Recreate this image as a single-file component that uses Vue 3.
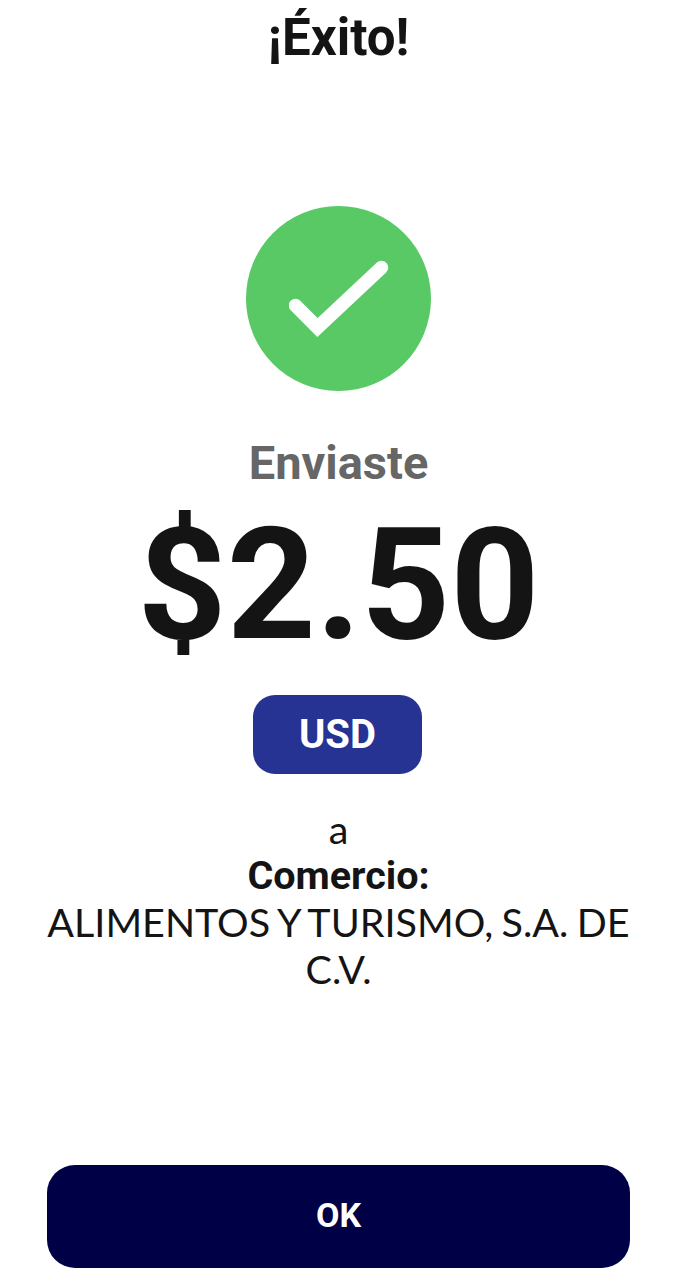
<template>
  <div class="screen">
    <h1 class="title">¡Éxito!</h1>
    <div class="check">
      <svg width="100" height="80" viewBox="0 0 100 80">
        <path d="M6.5 46.5 L28.5 68.5 L92.5 8.5" fill="none" stroke="#fff" stroke-width="13.5" stroke-linecap="round" stroke-linejoin="miter" />
      </svg>
    </div>
    <div class="sent">Enviaste</div>
    <div class="amount">$2.50</div>
    <div class="currency">USD</div>
    <div class="recipient">
      <div>a</div>
      <div class="label">Comercio:</div>
      <div>ALIMENTOS Y TURISMO, S.A. DE C.V.</div>
    </div>
    <button class="ok">OK</button>
  </div>
</template>

<script setup>
</script>

<style>
html, body {
  margin: 0;
  background: #fff;
}
</style>

<style scoped>
.screen {
  height: 1280px;
  display: flex;
  flex-direction: column;
  align-items: center;
  font-family: Roboto, sans-serif;
  color: #141414;
  box-sizing: border-box;
  padding: 0 47px;
}

.title {
  margin: 10px 0 0;
  font-size: 51px;
  line-height: 56px;
  font-weight: 700;
}

.check {
  width: 185px;
  height: 185px;
  margin-top: 140px;
  border-radius: 50%;
  background: #59c966;
  display: flex;
  align-items: center;
  justify-content: center;
}

.sent {
  margin-top: 44px;
  font-size: 47px;
  line-height: 56px;
  font-weight: 700;
  color: #666;
}

.amount {
  margin-top: 6px;
  font-size: 155.5px;
  line-height: 176px;
  font-weight: 700;
}

.currency {
  width: 169px;
  height: 79px;
  margin: 22px 2px 0 0;
  border-radius: 22px;
  background: #263393;
  color: #fff;
  font-size: 40px;
  font-weight: 700;
  display: flex;
  align-items: center;
  justify-content: center;
}

.recipient {
  margin-top: 32px;
  font-family: Lato, sans-serif;
  font-size: 39.5px;
  line-height: 46.5px;
  word-spacing: -1.7px;
  text-align: center;
}

.label {
  font-family: Roboto, sans-serif;
  font-size: 39.5px;
  font-weight: 700;
}

.ok {
  width: 100%;
  height: 103px;
  margin-top: auto;
  margin-bottom: 12px;
  padding: 0 0 4px;
  border: none;
  border-radius: 28px;
  background: #000046;
  color: #fff;
  font-family: Roboto, sans-serif;
  font-size: 34px;
  font-weight: 700;
}
</style>
